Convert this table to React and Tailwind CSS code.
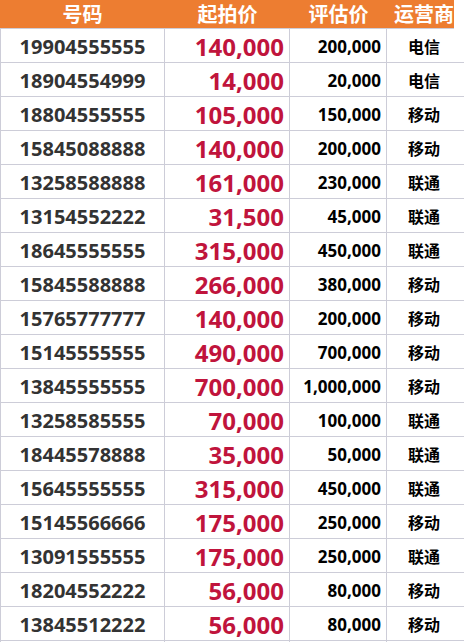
const ROWS = [
  ['19904555555', '140,000', '200,000', '电信'],
  ['18904554999', '14,000', '20,000', '电信'],
  ['18804555555', '105,000', '150,000', '移动'],
  ['15845088888', '140,000', '200,000', '移动'],
  ['13258588888', '161,000', '230,000', '联通'],
  ['13154552222', '31,500', '45,000', '联通'],
  ['18645555555', '315,000', '450,000', '联通'],
  ['15845588888', '266,000', '380,000', '移动'],
  ['15765777777', '140,000', '200,000', '移动'],
  ['15145555555', '490,000', '700,000', '移动'],
  ['13845555555', '700,000', '1,000,000', '移动'],
  ['13258585555', '70,000', '100,000', '联通'],
  ['18445578888', '35,000', '50,000', '联通'],
  ['15645555555', '315,000', '450,000', '联通'],
  ['15145566666', '175,000', '250,000', '移动'],
  ['13091555555', '175,000', '250,000', '联通'],
  ['18204552222', '56,000', '80,000', '移动'],
  ['13845512222', '56,000', '80,000', '移动'],
];

const font = { fontFamily: '"Open Sans", "Noto Sans CJK SC", sans-serif' };

export default function App() {
  return (
    <div className="w-[464px] h-[642px] bg-white overflow-hidden font-bold" style={font}>
      <div className="grid grid-cols-[165px_125px_97px_67px] w-[454px] h-[29px] bg-[#ed7d31] text-white text-[20px] leading-[29px] whitespace-nowrap border-b border-[#cdcdd8]">
        <div className="text-center">号码</div>
        <div className="text-center">起拍价</div>
        <div className="text-center">评估价</div>
        <div className="text-right">运营商</div>
      </div>
      {ROWS.map((r) => (
        <div key={r[0]} className="grid grid-cols-[165px_125px_97px_1fr] h-[34px] border-b border-[#cdcdd8] items-center">
          <div className="h-full flex items-center justify-center border-l border-r border-[#cdcdd8] text-[#333333] text-[20px]">
            {r[0]}
          </div>
          <div className="h-full flex items-center justify-end pr-[5px] border-r border-[#cdcdd8] text-[#c0143c] text-[24px]">
            {r[1]}
          </div>
          <div className="h-full flex items-center justify-end pr-[5px] border-r border-[#cdcdd8] text-black text-[17px]">
            {r[2]}
          </div>
          <div className="h-full flex items-center justify-center pr-[3px] text-black text-[16px]">
            {r[3]}
          </div>
        </div>
      ))}
    </div>
  );
}
